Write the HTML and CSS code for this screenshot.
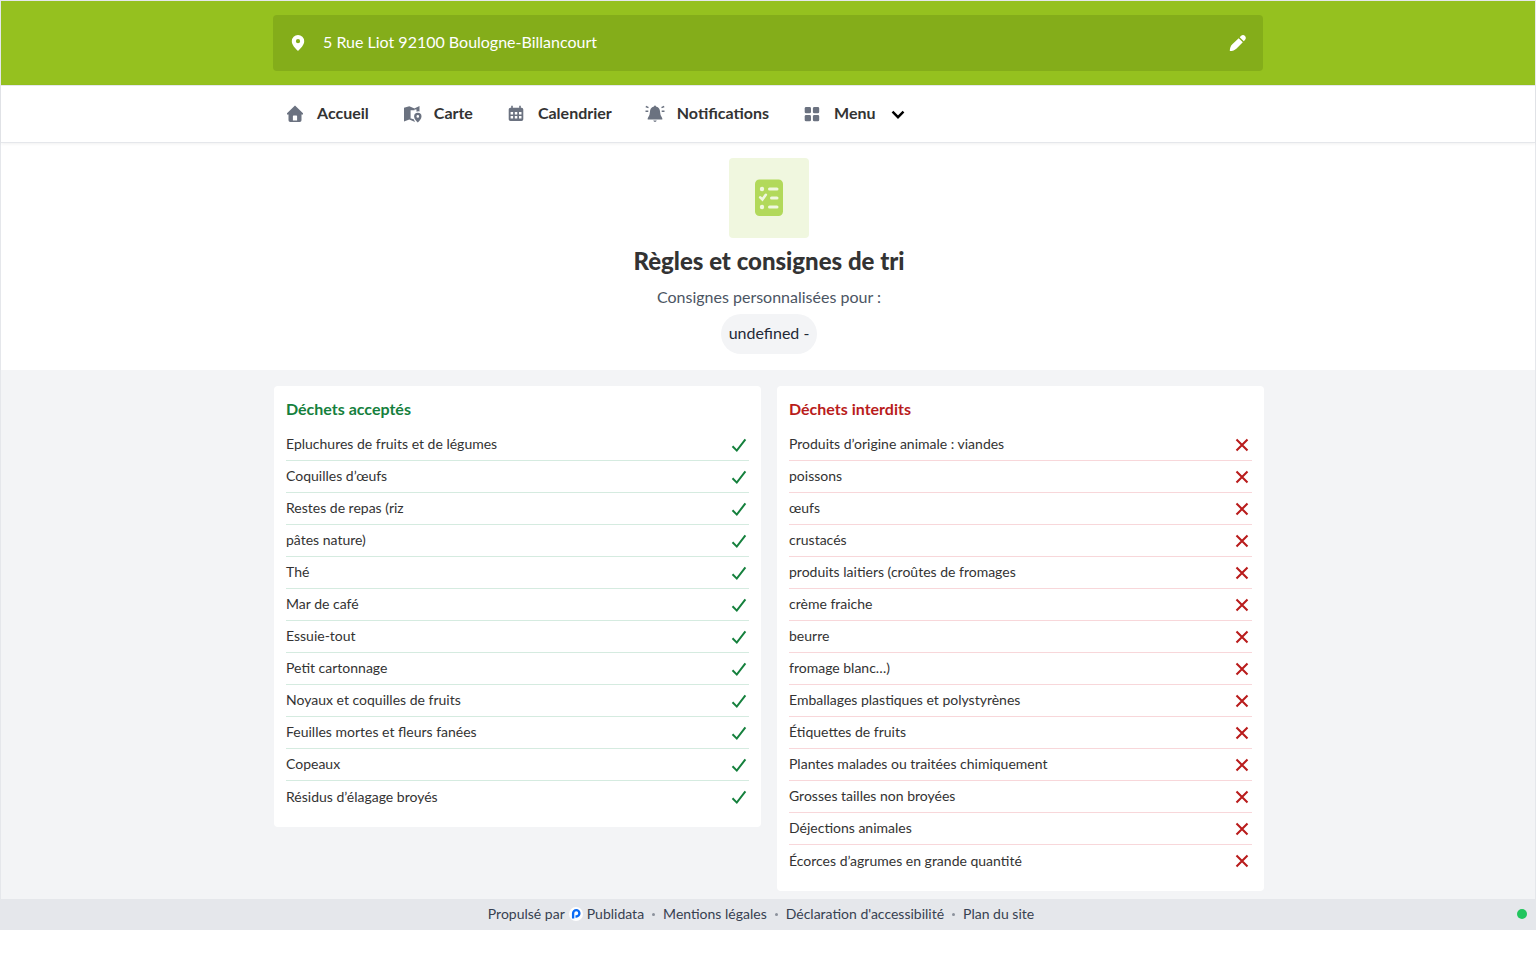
FILE: index.html
```html
<!DOCTYPE html>
<html lang="fr">
<head>
    <meta charset="utf-8">
    <meta name="viewport" content="width=device-width, initial-scale=1">
    <title>Règles et consignes de tri</title>
    <link rel="stylesheet" href="styles.css">
</head>
<body>
    <!-- Icons used several times -->
    <svg class="sprite" aria-hidden="true">
        <symbol id="check" viewBox="0 0 20 20"><path d="M3.5 11.2 7.8 15.6 16.4 4.4" fill="none" stroke="currentColor" stroke-width="2"/></symbol>
        <symbol id="cross" viewBox="0 0 20 20"><path d="M4.5 4.5 15.5 15.5M15.5 4.5 4.5 15.5" fill="none" stroke="currentColor" stroke-width="2.1"/></symbol>
    </svg>

    <div class="widget">
        <header class="header">
            <div class="container address">
                <svg class="address-pin" viewBox="0 0 18 18"><path fill="currentColor" fill-rule="evenodd" d="M9 1a6.2 6.2 0 0 0-6.2 6.2C2.800 11 6.500 14.500 9 17c2.500-2.500 6.200-6 6.200-9.800A6.200 6.200 0 0 0 9 1Zm0 4.100a2.100 2.100 0 1 1 0 4.200 2.100 2.100 0 0 1 0-4.200Z"/></svg>
                <span class="address-text">5 Rue Liot 92100 Boulogne-Billancourt</span>
                <button class="edit-btn" type="button" aria-label="Modifier l'adresse">
                    <svg viewBox="0 0 18 18"><path fill="currentColor" d="M9.700 4.200 13.800 8.300 7.600 14.400C5.900 16.100 3.600 17 .8 17c0-2.800.8-5 2.500-6.700ZM10.700 3.200l1.200-1.200c1.300-1.300 3-1.200 4.100-.1 1.100 1.100 1.200 2.800-.1 4.100L14.800 7.300Z"/></svg>
                </button>
            </div>
        </header>

        <nav class="nav">
            <div class="container nav-list">
                <a href="#">
                    <svg viewBox="0 0 20 20"><path fill="currentColor" fill-rule="evenodd" d="M10 1.600 2 9.200V10.600H3.500V16.200Q3.500 18 5.300 18H14.700Q16.500 18 16.500 16.200V10.600H18V9.200ZM8.600 11.600h2.800q.700 0 .700.700V16.400H7.900V12.300q0-.700.700-.700Z"/></svg>
                    Accueil
                </a>
                <a href="#">
                    <svg viewBox="0 0 20 20"><path fill="currentColor" d="M2 3.800 7.300 2.200v13.300L2 17.400ZM7.300 2.200l5.200 2.200v1.900H8.600v9.300l-1.300-.1ZM12.300 4.400 17.500 2v5.600q-1.500-.6-3 .2V5.500h-2.200ZM8.300 14.200l3.400 1 1.400 2.900-5.800-2.600Z"/><path fill="currentColor" fill-rule="evenodd" d="M15.800 8.700a3.700 3.700 0 0 0-3.700 3.700c0 2.300 2.100 4.400 3.700 6.200 1.600-1.800 3.700-3.900 3.700-6.200a3.700 3.700 0 0 0-3.700-3.700Zm0 2.400a1.300 1.300 0 1 1 0 2.600 1.300 1.300 0 0 1 0-2.600Z"/></svg>
                    Carte
                </a>
                <a href="#">
                    <svg viewBox="0 0 20 20"><path fill="currentColor" fill-rule="evenodd" d="M5.200 1.800h1.600v2h6.400v-2h1.600v2h.7q1.800 0 1.800 1.800v9.600q0 1.800-1.800 1.800H4.500q-1.800 0-1.800-1.800V5.600q0-1.800 1.800-1.800h.7ZM4.600 7.900v2.500h2.500V7.900Zm4.200 0v2.500h2.500V7.900Zm4.200 0v2.500h2.500V7.900Zm-8.400 4.200v2.500h2.500v-2.500Zm4.200 0v2.500h2.500v-2.500Zm4.200 0v2.500h2.500v-2.500Z"/></svg>
                    Calendrier
                </a>
                <a href="#">
                    <svg viewBox="0 0 20 20"><path fill="currentColor" d="M10 1.500q.9 0 1 .9c2.900.7 4 2.800 4 5.200q0 3.800 2.300 6.600v1.200H2.700v-1.200Q5 11.400 5 7.600c0-2.400 1.100-4.500 4-5.200q.1-.9 1-.9ZM8.200 16.500h3.600q-.6 1.400-1.800 1.400t-1.800-1.400Z"/><path d="m.8 2.500 2.700 1.200M.5 7.200h2.800M19.200 2.500l-2.700 1.200M19.500 7.200h-2.800" stroke="currentColor" stroke-width="1.400"/></svg>
                    Notifications
                </a>
                <button class="menu-btn" type="button">
                    <svg viewBox="0 0 20 20" fill="currentColor"><rect x="2.700" y="3" width="6.300" height="6.300" rx="1.400"/><rect x="10.900" y="3" width="6.300" height="6.300" rx="1.400"/><rect x="2.700" y="11" width="6.300" height="6.300" rx="1.400"/><rect x="10.900" y="11" width="6.300" height="6.300" rx="1.400"/></svg>
                    Menu
                    <svg class="chevron" viewBox="0 0 20 20"><path d="m4.500 7.700 5.500 5.500 5.500-5.500" fill="none" stroke="currentColor" stroke-width="2.400"/></svg>
                </button>
            </div>
        </nav>

        <section class="hero">
            <div class="hero-icon">
                <svg viewBox="0 0 40 40"><rect x="6" y="1.500" width="28" height="36.500" rx="4.500" fill="#b2d95b"/><g fill="none" stroke="#f0f7df" stroke-width="3" stroke-linecap="round"><path d="M20.500 11h7.500M22.500 20h5.500M20.500 29h7.500"/><path d="m11.200 19.400 2.200 2.100 3.400-4.700" stroke-width="2.600"/></g><circle cx="13" cy="11" r="2.200" fill="#f0f7df"/><circle cx="13" cy="29" r="2.200" fill="#f0f7df"/></svg>
            </div>
            <h1>Règles et consignes de tri</h1>
            <p>Consignes personnalisées pour :</p>
            <span class="pill">undefined -</span>
        </section>

        <main class="main">
            <div class="container columns">
                <section class="card accepted">
                    <h2>Déchets acceptés</h2>
                    <ul>
                        <li>Epluchures de fruits et de légumes <svg><use href="#check"/></svg></li>
                        <li>Coquilles d’œufs <svg><use href="#check"/></svg></li>
                        <li>Restes de repas (riz <svg><use href="#check"/></svg></li>
                        <li>pâtes nature) <svg><use href="#check"/></svg></li>
                        <li>Thé <svg><use href="#check"/></svg></li>
                        <li>Mar de café <svg><use href="#check"/></svg></li>
                        <li>Essuie-tout <svg><use href="#check"/></svg></li>
                        <li>Petit cartonnage <svg><use href="#check"/></svg></li>
                        <li>Noyaux et coquilles de fruits <svg><use href="#check"/></svg></li>
                        <li>Feuilles mortes et fleurs fanées <svg><use href="#check"/></svg></li>
                        <li>Copeaux <svg><use href="#check"/></svg></li>
                        <li>Résidus d’élagage broyés <svg><use href="#check"/></svg></li>
                    </ul>
                </section>

                <section class="card refused">
                    <h2>Déchets interdits</h2>
                    <ul>
                        <li>Produits d’origine animale : viandes <svg><use href="#cross"/></svg></li>
                        <li>poissons <svg><use href="#cross"/></svg></li>
                        <li>œufs <svg><use href="#cross"/></svg></li>
                        <li>crustacés <svg><use href="#cross"/></svg></li>
                        <li>produits laitiers (croûtes de fromages <svg><use href="#cross"/></svg></li>
                        <li>crème fraiche <svg><use href="#cross"/></svg></li>
                        <li>beurre <svg><use href="#cross"/></svg></li>
                        <li>fromage blanc…) <svg><use href="#cross"/></svg></li>
                        <li>Emballages plastiques et polystyrènes <svg><use href="#cross"/></svg></li>
                        <li>Étiquettes de fruits <svg><use href="#cross"/></svg></li>
                        <li>Plantes malades ou traitées chimiquement <svg><use href="#cross"/></svg></li>
                        <li>Grosses tailles non broyées <svg><use href="#cross"/></svg></li>
                        <li>Déjections animales <svg><use href="#cross"/></svg></li>
                        <li>Écorces d’agrumes en grande quantité <svg><use href="#cross"/></svg></li>
                    </ul>
                </section>
            </div>
        </main>

        <footer class="footer">
            <a class="powered" href="#">
                Propulsé par
                <svg viewBox="0 0 16 16"><circle cx="8" cy="8" r="8" fill="#fff"/><path d="M4.700 13.200V7.200A3.600 3.600 0 1 1 8.300 10.800H7.400" fill="none" stroke="#0a6cf5" stroke-width="2.700"/></svg>
                Publidata
            </a>
            <i class="dot"></i>
            <a href="#">Mentions légales</a>
            <i class="dot"></i>
            <a href="#">Déclaration d'accessibilité</a>
            <i class="dot"></i>
            <a href="#">Plan du site</a>
            <span class="status"></span>
        </footer>
    </div>
</body>
</html>
```
FILE: styles.css
```css
* {
    box-sizing: border-box;
}

body {
    margin: 0;
    font-family: Lato, "Liberation Sans", sans-serif;
    font-size: 16px;
    line-height: 24px;
    color: #333;
    background: #fff;
}

h1, h2, p, ul {
    margin: 0;
    padding: 0;
}

a {
    color: inherit;
    text-decoration: none;
}

button {
    padding: 0;
    border: none;
    background: none;
    font: inherit;
    color: inherit;
    cursor: pointer;
}

svg {
    display: block;
    flex-shrink: 0;
}

.sprite {
    position: absolute;
    width: 0;
    height: 0;
}

.widget {
    border: 1px solid #e5e7eb;
}

.container {
    width: 100%;
    max-width: 990px;
    margin: 0 auto;
}

/* Address bar */
.header {
    padding: 14px 0;
    background: #95c11f;
}

.address {
    display: flex;
    align-items: center;
    height: 56px;
    padding: 0 16px;
    border-radius: 4px;
    background: #84ad1a;
    color: #fff;
}

.address svg {
    width: 18px;
    height: 18px;
}

.address-text {
    flex: 1;
    padding: 0 16px 2px;
}

/* Navigation */
.nav {
    border-top: 1px solid #e5e7eb;
    border-bottom: 1px solid #e5e7eb;
    box-shadow: 0 1px 3px rgba(0, 0, 0, 0.06);
}

.nav-list {
    display: flex;
    gap: 33px;
    padding: 15px 12px 17px;
    font-weight: 700;
}

.nav-list a,
.menu-btn {
    display: flex;
    align-items: center;
    gap: 12px;
}

.nav-list svg {
    width: 20px;
    height: 20px;
    margin-top: 2px;
    color: #6b7280;
}

.nav-list .chevron {
    color: #000;
}

/* Title */
.hero {
    display: flex;
    flex-direction: column;
    align-items: center;
    padding: 15px 0 16px 2px;
    text-align: center;
}

.hero-icon {
    padding: 20px;
    border-radius: 4px;
    background: #f0f7df;
}

.hero-icon svg {
    width: 40px;
    height: 40px;
}

.hero h1 {
    margin: 7px 0 8px;
    font-size: 24px;
    font-weight: 900;
    line-height: 32px;
}

.hero p {
    color: #4b5563;
}

.pill {
    margin-top: 5px;
    padding: 7px 8px 9px;
    border-radius: 20px;
    background: #f3f4f6;
    color: #1f2937;
}

/* Waste lists */
.main {
    padding: 16px 0 8px 2px;
    background: #f3f4f6;
}

.columns {
    display: grid;
    grid-template-columns: 1fr 1fr;
    align-items: start;
    gap: 16px;
}

.card {
    padding: 11px 12px 12px;
    border-radius: 4px;
    background: #fff;
}

.card h2 {
    margin-bottom: 8px;
    font-size: 16px;
    line-height: 24px;
}

.card li {
    display: flex;
    align-items: center;
    justify-content: space-between;
    height: 32px;
    padding-bottom: 2px;
    border-bottom: 1px solid #d5ebe0;
    font-size: 14px;
}

.card li svg {
    width: 20px;
    height: 20px;
    margin-top: 2px;
}

.card li:last-child {
    height: 34px;
    border-bottom: none;
}

.card li:last-child svg {
    margin-top: 0;
}

.accepted h2,
.accepted svg {
    color: #15803d;
}

.refused h2,
.refused svg {
    color: #b91c1c;
}

.refused li {
    border-color: #f8d7da;
}

/* Footer */
.footer {
    position: relative;
    display: flex;
    align-items: center;
    justify-content: center;
    gap: 8px;
    height: 30px;
    padding-right: 14px;
    background: #e5e7eb;
    color: #374151;
    font-size: 14px;
}

.powered {
    display: flex;
    align-items: center;
    gap: 4px;
}

.powered svg {
    width: 14px;
    height: 14px;
}

.dot {
    width: 3px;
    height: 3px;
    border-radius: 50%;
    background: #8b919b;
}

.status {
    position: absolute;
    right: 8px;
    width: 10px;
    height: 10px;
    border-radius: 50%;
    background: #22c55e;
}
```
